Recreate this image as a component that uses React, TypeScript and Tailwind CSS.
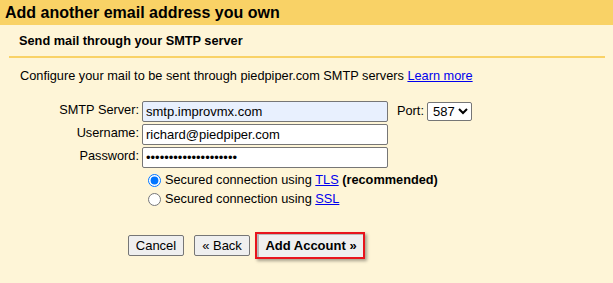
import { useState } from 'react';

export default function App() {
    const [secure, setSecure] = useState<'tls' | 'ssl'>('tls');
    const [port, setPort] = useState('587');

    const labelCls = "w-[139px] text-right leading-[15px] pt-[1px]";
    const inputCls = "ml-[3px] w-[246px] h-[21px] border border-[#767676] rounded-[2px] px-[3px] text-[13px] outline-none";

    return (
        <div className="w-[613px] h-[283px] bg-[#fef5d7] text-[12.75px] text-black font-['Liberation_Sans',Arial,sans-serif]">
            {/* Header */}
            <div className="h-[25px] bg-[#f9d266] pl-[5px] flex items-center text-[16px] font-bold">
                Add another email address you own
            </div>

            <div className="ml-[9px] w-[596px] h-[33px] border-b-2 border-[#f9d266] pl-[10px] flex items-center font-bold">
                Send mail through your SMTP server
            </div>

            <div className="pl-[20px] mt-[10px] leading-[15px]">
                Configure your mail to be sent through piedpiper.com SMTP servers{' '}
                <a href="#" className="text-[#0000ee] underline">Learn more</a>
            </div>

            {/* Form */}
            <div className="mt-[18px] flex flex-col gap-[2px]">
                <div className="flex items-start">
                    <label className={labelCls}>SMTP Server:</label>
                    <input className={`${inputCls} bg-[#e8f0fe]`} defaultValue="smtp.improvmx.com" />
                    <label className="ml-[9px] leading-[15px] pt-[2px]">Port:</label>
                    <select
                        value={port}
                        onChange={e => setPort(e.target.value)}
                        className="ml-[3px] mt-[1px] h-[19px] w-[45px] border border-[#767676] rounded-[2px] bg-white text-[13px] pl-[1px]"
                    >
                        <option value="587">587</option>
                        <option value="465">465</option>
                        <option value="25">25</option>
                    </select>
                </div>
                <div className="flex items-start">
                    <label className={labelCls}>Username:</label>
                    <input className={`${inputCls} bg-white`} defaultValue="richard@piedpiper.com" />
                </div>
                <div className="flex items-start">
                    <label className={labelCls}>Password:</label>
                    <input type="password" className={`${inputCls} bg-white`} defaultValue="iloveyouguys12345678" />
                </div>
            </div>

            {/* Security */}
            <div className="mt-[3px] ml-[145px] flex flex-col gap-[1px]">
                <label className="flex items-center h-[18px]">
                    <input type="radio" name="sec" checked={secure === 'tls'} onChange={() => setSecure('tls')} className="m-0 ml-[3px] mr-[4px] w-[13px] h-[13px] accent-[#0075ff]" />
                    Secured connection using&nbsp;<a href="#" className="text-[#0000ee] underline">TLS</a>&nbsp;<b>(recommended)</b>
                </label>
                <label className="flex items-center h-[18px]">
                    <input type="radio" name="sec" checked={secure === 'ssl'} onChange={() => setSecure('ssl')} className="m-0 ml-[3px] mr-[4px] w-[13px] h-[13px]" />
                    Secured connection using&nbsp;<a href="#" className="text-[#0000ee] underline">SSL</a>
                </label>
            </div>

            {/* Buttons */}
            <div className="mt-[24px] ml-[128px] flex items-center">
                <button className="h-[21px] w-[56px] bg-[#efefef] border border-[#767676] rounded-[2px] text-[13px]">Cancel</button>
                <button className="ml-[10px] h-[21px] w-[56px] bg-[#efefef] border border-[#767676] rounded-[2px] text-[13px]">« Back</button>
                <div className="ml-[5px] h-[27px] w-[110px] border-2 border-[#e8141c] shadow-[2px_2px_3px_rgba(0,0,0,0.35)] flex">
                    <button className="flex-1 bg-[#efefef] border-l-2 border-t border-[#b8b8b8] text-[13px] font-bold">Add Account »</button>
                </div>
            </div>
        </div>
    );
}
